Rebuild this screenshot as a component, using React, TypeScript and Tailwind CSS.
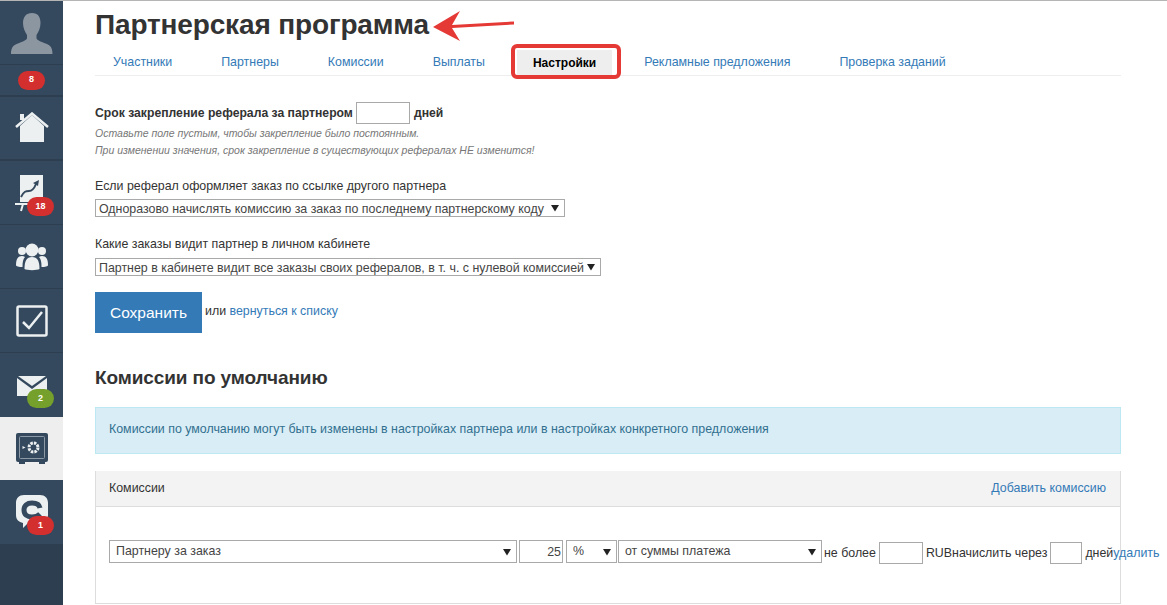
import React from "react";

const navLink = "text-[#337ab7]";

const tabs = ["Участники", "Партнеры", "Комиссии", "Выплаты", "Настройки", "Рекламные предложения", "Проверка заданий"];

const Badge = ({ n, green }: { n: number; green?: boolean }) => (
  <span
    className={`absolute left-[27px] top-[36px] flex h-[19px] w-[27px] items-center justify-center rounded-[10px] text-[9px] font-bold text-white ${
      green ? "bg-[#76a02c]" : "bg-[#d32f2f]"
    }`}
  >
    {n}
  </span>
);

const Arrow = () => (
  <svg className="pointer-events-none absolute right-[6px] top-1/2 -translate-y-1/2" width="8" height="8" viewBox="0 0 8 8">
    <path d="M0 1h8L4 7.500z" fill="#222" />
  </svg>
);

const Select = ({ label, className, textClass }: { label: string; className: string; textClass?: string }) => (
  <div className={`relative shrink-0 ${className}`}>
    <select
      defaultValue={label}
      className={`h-full w-full appearance-none rounded-none border border-[#a9a9a9] bg-white pl-[3px] text-[#444] outline-none ${textClass ?? ""}`}
    >
      <option>{label}</option>
    </select>
    <Arrow />
  </div>
);

const IconBox = ({ children }: { children: React.ReactNode }) => (
  <svg width="34" height="34" viewBox="0 0 34 34">
    {children}
  </svg>
);

export default function App() {
  return (
    <div
      className="flex h-screen overflow-hidden border-t border-[#b5b5b5] bg-white text-[12.4px] text-[#333]"
      style={{ fontFamily: '"Liberation Sans", Arial, sans-serif' }}
    >
      {/* сайдбар */}
      <aside className="flex w-[63px] shrink-0 flex-col bg-[#2c3e50]">
        <div className="flex h-[64px] items-end justify-center border-b border-[#2c3e50] bg-[#34495e]">
          <svg width="42" height="41" viewBox="0 0 42 41" className="mb-[10px]">
            <path
              d="M21 0c6 0 8.500 4 8.500 10 0 5-2 9-4 12v3c0 2 4 3.500 9 5.500 4 1.500 7 3 7 10.500H0c0-7.500 3-9 7-10.500 5-2 9-3.500 9-5.500v-3c-2-3-4-7-4-12C12 4 15 0 21 0z"
              fill="#8c96a1"
            />
          </svg>
        </div>
        <div className="flex h-[32px] items-center justify-center border-b-2 border-[#2c3e50] bg-[#34495e]">
          <span className="flex h-[19px] w-[27px] items-center justify-center rounded-[10px] bg-[#d32f2f] text-[9px] font-bold text-white">8</span>
        </div>
        <div className="flex h-[64px] items-center justify-center border-b-2 border-[#2c3e50] bg-[#34495e]">
          <svg width="34" height="32" viewBox="0 0 34 32">
            <path d="M5 14 17 3l12 11v16H5z" fill="#ecf0f1" />
            <path d="M1 15 17 1.500 33 15" fill="none" stroke="#ecf0f1" strokeWidth="2.500" />
            <path d="M5 2h4v6H5z" fill="#ecf0f1" />
          </svg>
        </div>
        <div className="relative flex h-[64px] items-start justify-center border-b border-[#2c3e50] bg-[#34495e] pt-[14px]">
          <svg width="34" height="38" viewBox="0 0 34 38" className="-ml-[2px]">
            <path d="M6 0h23v27H6z" fill="#ecf0f1" />
            <path d="M7 22c3-6 5-6 8-6 3 0 5-2 7-7" fill="none" stroke="#34495e" strokeWidth="2" />
            <path d="M19 8l6-3-1 6z" fill="#34495e" />
            <path d="M1 29h26M9 29l-2 7" stroke="#ecf0f1" strokeWidth="2" fill="none" />
          </svg>
          <Badge n={18} />
        </div>
        <div className="flex h-[64px] items-center justify-center border-b border-[#2c3e50] bg-[#34495e]">
          <IconBox>
            <circle cx="17" cy="10" r="6.500" fill="#ecf0f1" />
            <circle cx="7" cy="11" r="4" fill="#ecf0f1" />
            <circle cx="27" cy="11" r="4" fill="#ecf0f1" />
            <path d="M1 25c0-6 2-9 6-9 1 0 2 .5 3 1-2 2-2.500 5-2.500 10C4 27 1 26.500 1 25zM33 25c0-6-2-9-6-9-1 0-2 .5-3 1 2 2 2.500 5 2.500 10 3.500 0 6.500-.5 6.500-2z" fill="#ecf0f1" />
            <path d="M9.500 29c0-8 2-12 7.500-12s7.500 4 7.500 12c-2 1.500-13 1.500-15 0z" fill="#ecf0f1" />
          </IconBox>
        </div>
        <div className="flex h-[64px] items-center justify-center border-b border-[#2c3e50] bg-[#34495e]">
          <svg width="32" height="32" viewBox="0 0 32 32">
            <rect x="1.500" y="1.500" width="29" height="29" rx="1.500" fill="none" stroke="#ecf0f1" strokeWidth="2.500" />
            <path d="M7 17l6 6L26 7" fill="none" stroke="#ecf0f1" strokeWidth="2.500" />
          </svg>
        </div>
        <div className="relative flex h-[64px] items-start justify-center bg-[#34495e] pt-[23px]">
          <svg width="32" height="20" viewBox="0 0 32 20">
            <path d="M1 2v18h30V2L16 13z" fill="#ecf0f1" />
            <path d="M2 0h28L16 10z" fill="#ecf0f1" />
          </svg>
          <Badge n={2} green />
        </div>
        <div className="flex h-[63px] items-center justify-center bg-[#eeeeee]">
          <svg width="32" height="31" viewBox="0 0 32 31">
            <rect width="32" height="29" rx="2" fill="#34495e" />
            <path d="M3 28h6v3H3zM23 28h6v3h-6z" fill="#34495e" />
            <rect x="3.500" y="3.500" width="25" height="22" rx="1" fill="none" stroke="#8c99a6" strokeWidth="1" />
            <circle cx="17.500" cy="14.500" r="4.500" fill="none" stroke="#ecf0f1" strokeWidth="3" strokeDasharray="2.500 1" />
            <path d="M6.500 13l3 1.500-3 1.500z" fill="#ecf0f1" />
          </svg>
        </div>
        <div className="relative flex h-[64px] items-start justify-center bg-[#34495e] pt-[15px]">
          <svg width="32" height="34" viewBox="0 0 32 34">
            <path
              d="M8 0h16c5 0 8 3 8 8v12c0 5-3 8-8 8H12l-5 5v-5c-4-1-7-3-7-8V8c0-5 3-8 8-8z"
              fill="#ecf0f1"
            />
            <path d="M24 13c-.5-3-3-5-8-5-5 0-8 2.500-8 7s3 7 8 7c3 0 6-1 8-3" fill="none" stroke="#34495e" strokeWidth="5" />
          </svg>
          <Badge n={1} />
        </div>
      </aside>

      {/* контент */}
      <main className="relative min-w-0 flex-1 pl-[32px] pr-[46px]">
        <h1 className="pt-[8px] text-[28px] font-bold leading-[32px] tracking-[-0.15px] text-[#333]">Партнерская программа</h1>
        <svg className="absolute left-[369px] top-[9px]" width="84" height="32" viewBox="0 0 84 32">
          <path d="M1 17 28 1l-8 14 62-3.500v3L20 18l8 13z" fill="#e53935" />
        </svg>

        <nav className="mt-[9px] flex h-[26px] border-b border-[#eee] pl-[18px]">
          {tabs.map((t, i) => (
            <a
              key={t}
              className={
                i === 4
                  ? "relative -ml-[17px] mr-[32px] flex h-[25px] items-center bg-[#eeeeee] px-[16px] text-[12px] font-bold text-black"
                  : "mr-[49px] flex h-[25px] items-center text-[#337ab7]"
              }
            >
              {t}
              {i === 4 && (
                <span className="absolute -left-[6px] -right-[9px] -top-[6px] h-[35px] rounded-[6px] border-4 border-[#e53935]" />
              )}
            </a>
          ))}
        </nav>

        <div className="mt-[26px] flex h-[22px] items-center text-[12.2px] font-bold">
          <span>Срок закрепление реферала за партнером</span>
          <input className="mx-[3px] h-[22px] w-[54px] border border-[#a9a9a9] bg-white" />
          <span className="ml-[1px]">дней</span>
        </div>
        <p className="mt-[1px] text-[10.5px] italic leading-[17px] text-[#777]">
          Оставьте поле пустым, чтобы закрепление было постоянным.
          <br />
          При изменении значения, срок закрепление в существующих рефералах НЕ изменится!
        </p>

        <div className="mt-[18px] leading-[18px]">Если реферал оформляет заказ по ссылке другого партнера</div>
        <Select className="mt-[4px] h-[18px] w-[470px]" label="Одноразово начислять комиссию за заказ по последнему партнерскому коду" />

        <div className="mt-[18px] leading-[18px]">Какие заказы видит партнер в личном кабинете</div>
        <Select className="mt-[5px] h-[18px] w-[506px]" label="Партнер в кабинете видит все заказы своих рефералов, в т. ч. с нулевой комиссией" />

        <div className="mt-[16px] flex items-center">
          <button className="h-[41px] w-[107px] bg-[#337ab7] text-[15.5px] text-white">Сохранить</button>
          <span className="ml-[3px] -mt-[3px]">
            или <a className={navLink}>вернуться к списку</a>
          </span>
        </div>

        <h2 className="mt-[32px] text-[19px] font-bold leading-[26px] tracking-[-0.1px] text-[#333]">Комиссии по умолчанию</h2>

        <div className="mt-[16px] flex h-[47px] items-center border border-[#bce8f1] bg-[#d9edf7] px-[13px] pb-[3px] text-[#31708f]">
          <span>
            Комиссии по умолчанию могут быть изменены в <a>настройках</a> партнера или в <a>настройках</a> конкретного предложения
          </span>
        </div>

        <section className="mt-[17px] h-[133px] border border-t-0 border-[#ddd]">
          <div className="flex h-[36px] items-center justify-between border-b border-[#ddd] bg-[#f3f3f3] pb-[1px] pl-[13px] pr-[14px]">
            <span>Комиссии</span>
            <a className={navLink}>Добавить комиссию</a>
          </div>
          <div className="flex items-center whitespace-nowrap pl-[13px] pt-[32px]">
            <Select className="h-[23px] w-[408px]" textClass="pl-[6px]" label="Партнеру за заказ" />
            <input defaultValue="25" className="ml-[2px] h-[23px] w-[44px] shrink-0 border border-[#a9a9a9] pr-[1px] text-right text-[#444]" />
            <Select className="ml-[3px] h-[23px] w-[51px]" textClass="pl-[6px]" label="%" />
            <Select className="ml-[1px] h-[23px] w-[204px]" textClass="pl-[6px]" label="от суммы платежа" />
            <span className="ml-[2px] mt-[3px] flex shrink-0 items-center">
              не более
              <input className="mx-[3px] h-[22px] w-[44px] border border-[#a9a9a9]" />
              RUB
              <span>начислить через</span>
              <input className="mx-[3px] h-[22px] w-[32px] border border-[#a9a9a9]" />
              дней
              <a className={navLink}>удалить</a>
            </span>
          </div>
        </section>
      </main>
    </div>
  );
}
